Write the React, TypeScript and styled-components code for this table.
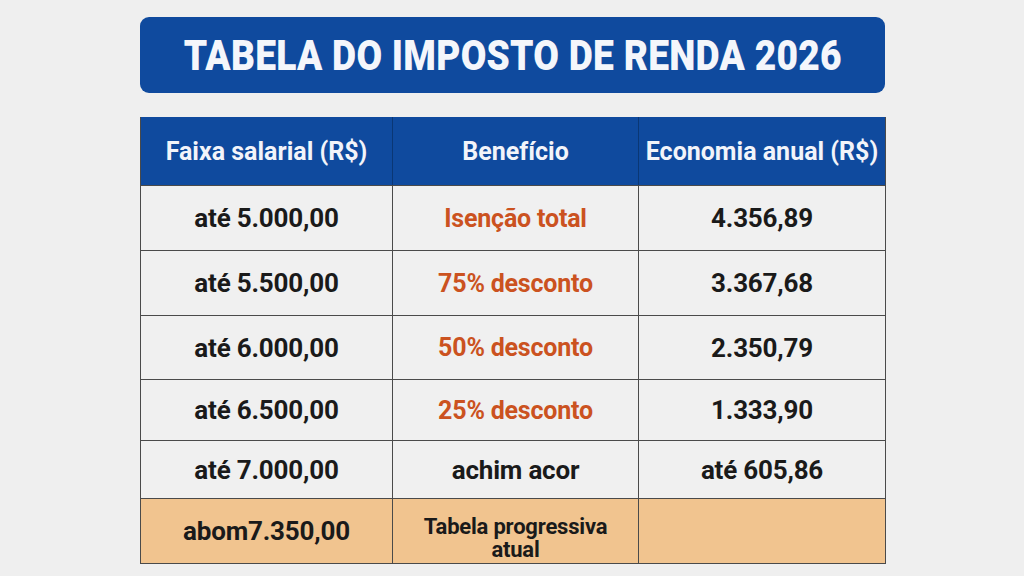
import React from "react";
import styled, { createGlobalStyle } from "styled-components";

const GlobalStyle = createGlobalStyle`
  html, body {
    margin: 0;
    padding: 0;
    background: #efefef;
  }
  body {
    font-family: Roboto, "Liberation Sans", sans-serif;
  }
`;

type Row = {
  faixa: string;
  beneficio: string;
  economia: string;
  accent?: boolean;
  small?: boolean;
  highlight?: boolean;
  height: number;
};

const rows: Row[] = [
  { faixa: "até 5.000,00", beneficio: "Isenção total", economia: "4.356,89", accent: true, height: 65 },
  { faixa: "até 5.500,00", beneficio: "75% desconto", economia: "3.367,68", accent: true, height: 65 },
  { faixa: "até 6.000,00", beneficio: "50% desconto", economia: "2.350,79", accent: true, height: 64 },
  { faixa: "até 6.500,00", beneficio: "25% desconto", economia: "1.333,90", accent: true, height: 61 },
  { faixa: "até 7.000,00", beneficio: "achim acor", economia: "até 605,86", height: 58 },
  { faixa: "abom7.350,00", beneficio: "Tabela progressiva atual", economia: "", small: true, highlight: true, height: 65 },
];

function App() {
  return (
    <Page>
      <GlobalStyle />
      <Banner>
        <Title>TABELA DO IMPOSTO DE RENDA 2026</Title>
      </Banner>
      <Table>
        <HeadRow>
          <HeadCell>Faixa salarial (R$)</HeadCell>
          <HeadCell>Benefício</HeadCell>
          <HeadCell>Economia anual (R$)</HeadCell>
        </HeadRow>
        {rows.map((r) => (
          <BodyRow key={r.faixa} $highlight={r.highlight} $height={r.height}>
            <Cell>{r.faixa}</Cell>
            <Cell $accent={r.accent} $small={r.small}>
              {r.beneficio}
            </Cell>
            <Cell>{r.economia}</Cell>
          </BodyRow>
        ))}
      </Table>
    </Page>
  );
}

export default App;

const Page = styled.div`
  width: 1024px;
  height: 576px;
  box-sizing: border-box;
  padding: 17px 0 0 140px;
  display: flex;
  flex-direction: column;
  overflow: hidden;
`;

const Banner = styled.div`
  width: 745px;
  height: 76px;
  background: #0f4a9e;
  border-radius: 9px;
  display: flex;
  align-items: center;
  justify-content: center;
`;

const Title = styled.h1`
  margin: 0;
  color: #f4f6fb;
  font-family: Roboto, "Liberation Sans", sans-serif;
  font-weight: 900;
  font-size: 42px;
  letter-spacing: 0.3px;
  white-space: nowrap;
  transform: scaleX(0.885);
`;

const Table = styled.div`
  margin-top: 24px;
  width: 746px;
  border: 1.5px solid #4a4a4a;
  border-top: none;
  box-sizing: border-box;
  display: flex;
  flex-direction: column;
`;

const gridCols = `251px 246px 1fr`;

const HeadRow = styled.div`
  display: grid;
  grid-template-columns: ${gridCols};
  height: 68px;
  background: #0f4a9e;
`;

const HeadCell = styled.div`
  display: flex;
  align-items: center;
  justify-content: center;
  color: #f2f4fa;
  font-weight: 700;
  font-size: 25px;
  letter-spacing: 0px;
  & + & {
    border-left: 1.5px solid #0a3775;
  }
`;

const BodyRow = styled.div<{ $highlight?: boolean; $height: number }>`
  display: grid;
  grid-template-columns: ${gridCols};
  height: ${(p) => p.$height}px;
  background: ${(p) => (p.$highlight ? "#f1c48f" : "#f0f0f0")};
  border-top: 1.5px solid #4a4a4a;
  box-sizing: border-box;
`;

const Cell = styled.div<{ $accent?: boolean; $small?: boolean }>`
  display: flex;
  align-items: center;
  justify-content: center;
  text-align: center;
  color: ${(p) => (p.$accent ? "#cb5220" : "#1a1a1a")};
  font-weight: 700;
  font-size: ${(p) => (p.$small ? "22px" : p.$accent ? "25px" : "26px")};
  line-height: ${(p) => (p.$small ? "23px" : "normal")};
  letter-spacing: -0.2px;
  padding: ${(p) => (p.$small ? "14px 20px 0" : "0")};
  & + & {
    border-left: 1.5px solid #4a4a4a;
  }
`;
